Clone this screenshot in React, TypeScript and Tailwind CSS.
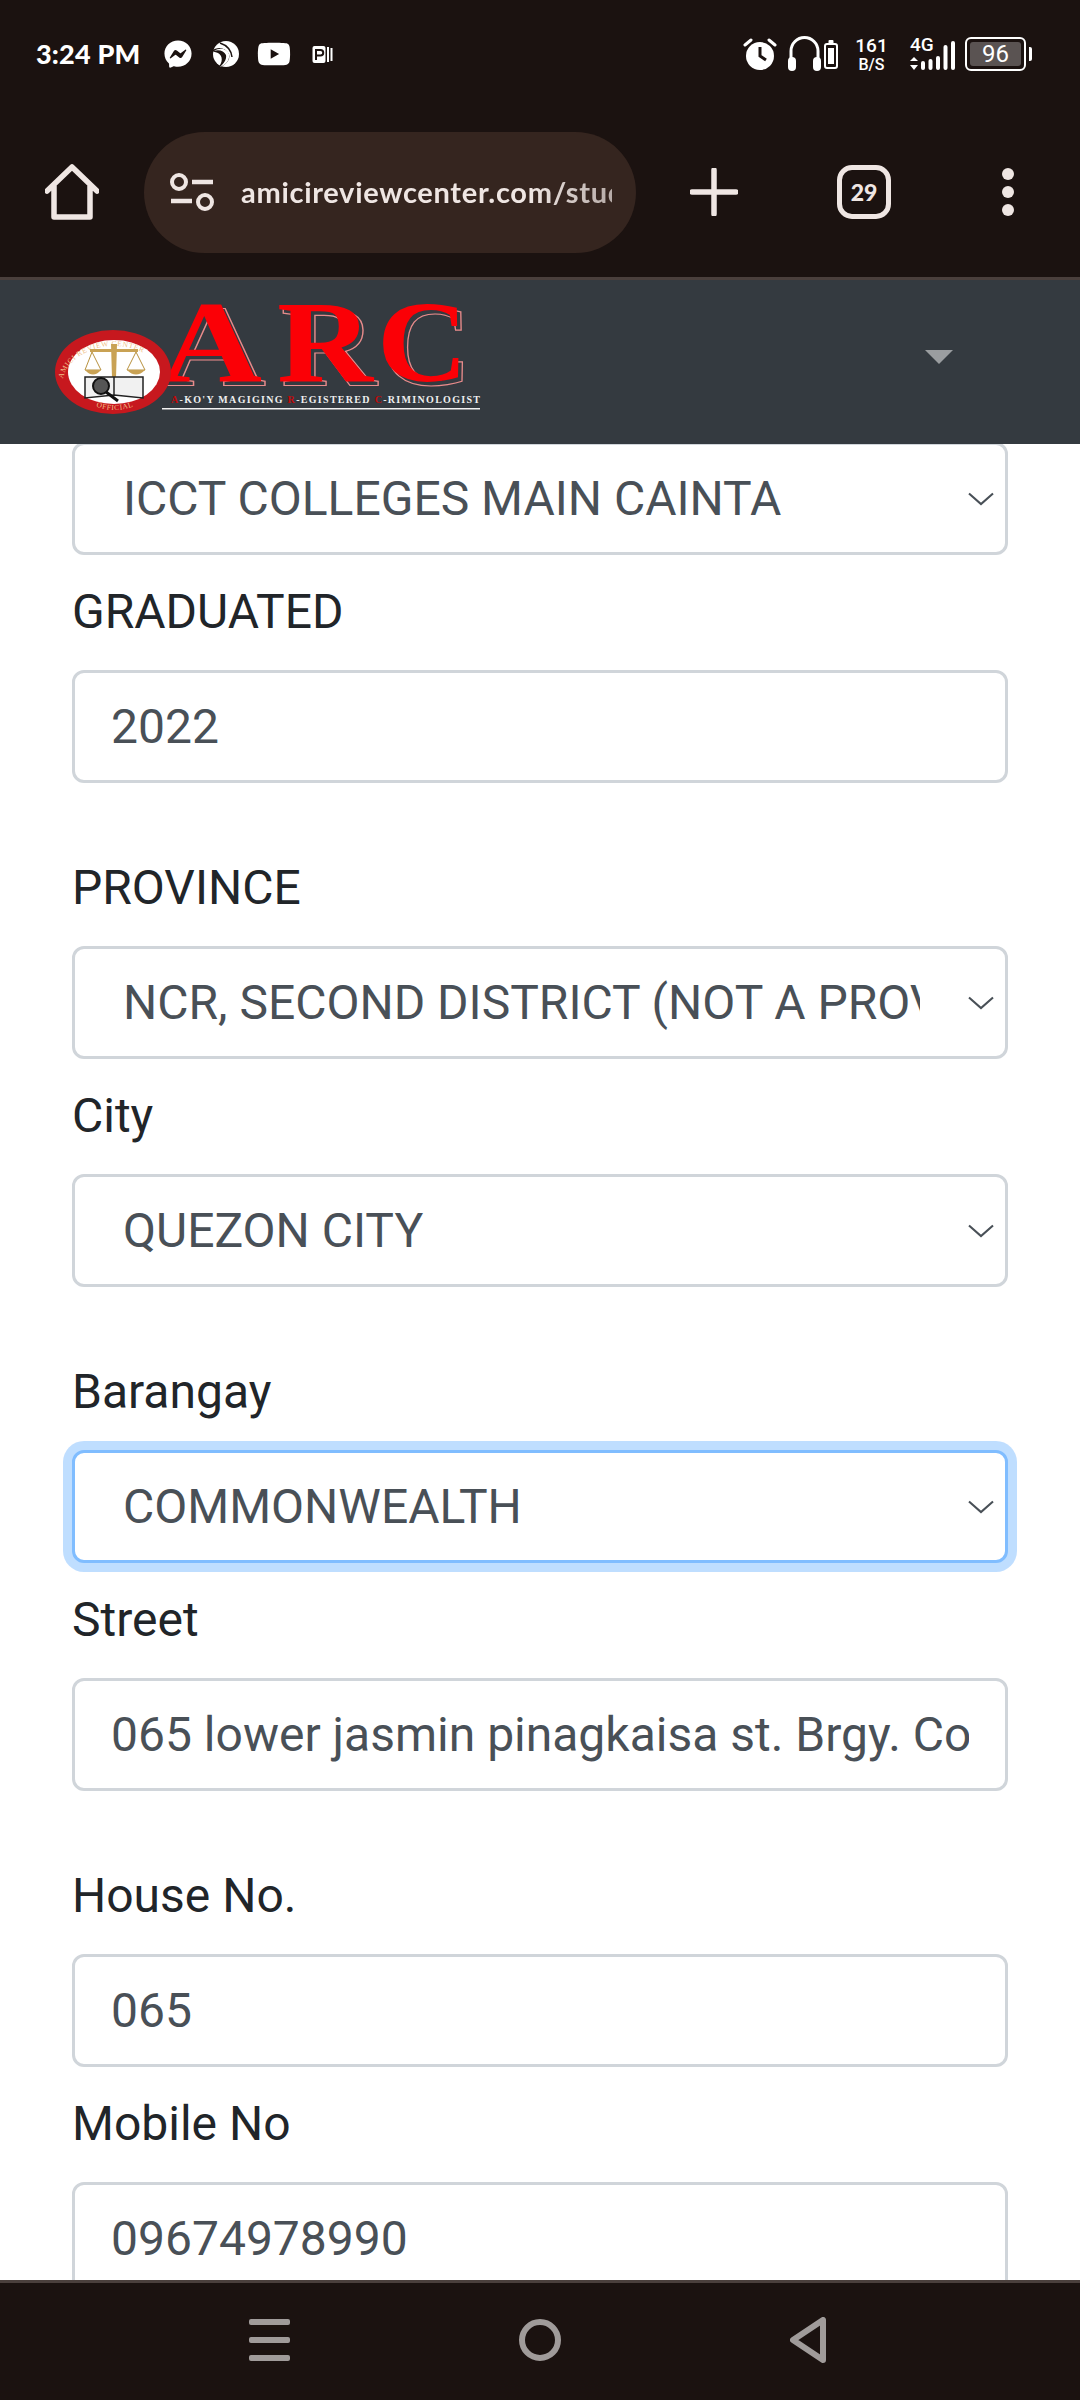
import React from "react";
import { FaFacebookMessenger, FaYoutube } from "react-icons/fa";

const ROBOTO = "font-['Roboto',sans-serif]";

function Chevron() {
  return (
    <svg className="absolute right-[14px] top-[50px] w-[26px] h-[14px]" viewBox="0 0 26 14" fill="none">
      <path d="M1 1.5 L13 12 L25 1.5" stroke="#495057" strokeWidth="2.1" />
    </svg>
  );
}

function SelectBox({ value, focus }: { value: string; focus?: boolean }) {
  return (
    <div className="relative">
      <select
        defaultValue={value}
        className={
          focus
            ? "block w-full h-[113px] appearance-none rounded-[12px] border-[3px] border-[#80bdff] bg-white pl-[48px] pr-[85px] text-[48px] text-[#495057] shadow-[0_0_0_9px_rgba(0,123,255,0.25)] outline-none"
            : "block w-full h-[113px] appearance-none rounded-[12px] border-[3px] border-[#d0d5da] bg-white pl-[48px] pr-[85px] text-[48px] text-[#495057] outline-none"
        }
      >
        <option>{value}</option>
      </select>
      <Chevron />
    </div>
  );
}

function InputBox({ value }: { value: string }) {
  return (
    <input
      readOnly
      value={value}
      className="block w-full h-[113px] rounded-[12px] border-[3px] border-[#d0d5da] bg-white px-[36px] text-[48px] text-[#495057] outline-none"
    />
  );
}

function Field({ label, wide, children }: { label: string; wide?: boolean; children: React.ReactNode }) {
  return (
    <div className={wide ? "mt-[69px]" : "mt-[21px]"}>
      <div className="h-[72px] mb-[22px] text-[48px] leading-[72px] text-[#212529]">{label}</div>
      {children}
    </div>
  );
}

function StatusBar() {
  return (
    <div className="h-[108px] flex items-center justify-between pl-[36px] pr-[48px] text-white">
      <div className="flex items-center">
        <span className="w-[106px] text-[27px] font-black tracking-[0.2px] font-['Lato',sans-serif] whitespace-nowrap">3:24 PM</span>
        <FaFacebookMessenger className="ml-[22px] w-[28px] h-[28px]" />
        <svg className="ml-[19px] w-[28px] h-[28px]" viewBox="0 0 28 28">
          <circle cx="15" cy="14" r="13" fill="#fff" />
          <path d="M0 11 C7 6 14 7 18 14 C20 20 14 26 7 28 C12 22 12 16 7 13 C5 12 3 12 0 11Z" fill="#1b1210" />
          <path d="M3 11 C8 9 13 11 15 15 C16 20 12 24 9 27 C15 25 19 20 18 14 C16 9 9 7 3 11Z" fill="#fff" />
          <path d="M9 3 C15 5 20 9 21 17" stroke="#1b1210" strokeWidth="1.5" fill="none" />
        </svg>
        <FaYoutube className="ml-[18px] w-[34px] h-[34px]" />
        <svg className="ml-[21px] w-[21px] h-[19px]" viewBox="0 0 21 19">
          <rect x="0.5" y="1" width="13" height="17" rx="2" fill="#fff" />
          <path d="M4 15 V5 H8.5 A2.6 2.6 0 0 1 8.5 10.5 H4" stroke="#1b1210" strokeWidth="2" fill="none" />
          <rect x="15" y="2" width="2" height="15" fill="#fff" />
          <rect x="18.5" y="3" width="2" height="13" fill="#fff" />
        </svg>
      </div>
      <div className="flex items-center">
        <svg className="w-[34px] h-[34px]" viewBox="0 0 34 34">
          <circle cx="17" cy="19" r="14" fill="#fff" />
          <path d="M17 10 V19 L23 23" stroke="#1b1210" strokeWidth="3" fill="none" />
          <path d="M2 8 L8 3 M32 8 L26 3" stroke="#fff" strokeWidth="3" strokeLinecap="round" />
        </svg>
        <svg className="ml-[11px] w-[33px] h-[36px]" viewBox="0 0 33 36" fill="none">
          <path d="M3 24 V15 A13.5 13.5 0 0 1 30 15 V24" stroke="#fff" strokeWidth="3" />
          <rect x="0" y="21" width="8" height="14" rx="4" fill="#fff" />
          <rect x="25" y="21" width="8" height="14" rx="4" fill="#fff" />
        </svg>
        <svg className="ml-[3px] w-[14px] h-[29px]" viewBox="0 0 14 29" fill="none">
          <rect x="4.5" y="0" width="5" height="4" rx="1" fill="#fff" />
          <rect x="1" y="4" width="12" height="24" rx="2" stroke="#fff" strokeWidth="2" />
          <rect x="4" y="8" width="6" height="16" fill="#fff" />
        </svg>
        <div className="ml-[19px] w-[29px] flex flex-col items-center font-['Roboto',sans-serif] font-medium text-white">
          <span className="text-[19px] leading-[20px]">161</span>
          <span className="text-[16px] leading-[17px]">B/S</span>
        </div>
        <div className="ml-[24px] w-[46px] h-[34px] relative">
          <span className="absolute left-0 top-[-2px] text-[19px] leading-[20px] font-['Roboto',sans-serif] font-medium">4G</span>
          <svg className="absolute left-0 top-0 w-[46px] h-[34px]" viewBox="0 0 46 34">
            <path d="M0 24 H8 L4 20Z M0 28 H8 L4 33Z" fill="#fff" />
            <rect x="11" y="24" width="4" height="9" rx="2" fill="#fff" />
            <rect x="18.5" y="22" width="4" height="11" rx="2" fill="#fff" />
            <rect x="26" y="19" width="4" height="14" rx="2" fill="#fff" />
            <rect x="33.5" y="8" width="4" height="25" rx="2" fill="#fff" />
            <rect x="41" y="4" width="4" height="29" rx="2" fill="#fff" />
          </svg>
        </div>
        <div className="ml-[9px] w-[61px] h-[34px] rounded-[6px] border-[2px] border-white p-[3px] flex">
          <div className="flex-1 rounded-[3px] bg-[#5a5352] flex items-center justify-center text-[24px] leading-none font-['Roboto',sans-serif] text-white">96</div>
        </div>
        <div className="ml-[3px] w-[3px] h-[14px] rounded-r-[2px] bg-white" />
      </div>
    </div>
  );
}

function Toolbar() {
  return (
    <div className="h-[168px] flex items-center pl-[45px] text-[#efe6e3]">
      <svg className="w-[54px] h-[56px]" viewBox="0 0 54 56" fill="none">
        <path d="M2 27 L27 3 L52 27 M9 22 V53 H45 V22" stroke="#efe6e3" strokeWidth="5.5" strokeLinecap="round" strokeLinejoin="round" />
      </svg>
      <div className="ml-[45px] w-[492px] h-[121px] rounded-full bg-[#35251f] flex items-center pl-[26px]">
        <svg className="w-[44px] h-[38px] shrink-0" viewBox="0 0 44 38" fill="none">
          <circle cx="9" cy="9" r="7" stroke="#efe6e3" strokeWidth="4" />
          <path d="M22 9 H43 M1 28 H22" stroke="#efe6e3" strokeWidth="4.5" />
          <circle cx="35" cy="29" r="7" stroke="#efe6e3" strokeWidth="4" />
        </svg>
        <div className="ml-[27px] w-[371px] overflow-hidden whitespace-nowrap text-[29px] font-bold tracking-[0.7px] font-['Lato',sans-serif] text-[#efe6e3] [mask-image:linear-gradient(to_right,#000_78%,rgba(0,0,0,0.7))]">
          amicireviewcenter.com/student
        </div>
      </div>
      <svg className="ml-[54px] w-[48px] h-[48px]" viewBox="0 0 48 48">
        <path d="M24 2 V46 M2 24 H46" stroke="#efe6e3" strokeWidth="5.5" strokeLinecap="round" />
      </svg>
      <div className="ml-[99px] w-[54px] h-[54px] rounded-[15px] border-[5.5px] border-[#efe6e3] flex items-center justify-center text-[23px] font-black leading-none font-['Lato',sans-serif]">
        29
      </div>
      <div className="ml-[111px] flex flex-col gap-[6px]">
        <div className="w-[12px] h-[12px] rounded-full bg-[#efe6e3]" />
        <div className="w-[12px] h-[12px] rounded-full bg-[#efe6e3]" />
        <div className="w-[12px] h-[12px] rounded-full bg-[#efe6e3]" />
      </div>
    </div>
  );
}

function ArcLetter({ ch, x, w }: { ch: string; x: number; w: number }) {
  return (
    <g fontFamily="'Liberation Serif',serif" fontWeight="700" fontSize="116">
      <text x={x + 4} y="385" textLength={w} lengthAdjust="spacingAndGlyphs" fill="none" stroke="#e88b8b" strokeWidth="1.2">{ch}</text>
      <text x={x} y="381" textLength={w} lengthAdjust="spacingAndGlyphs" fill="#fb0006">{ch}</text>
    </g>
  );
}

function Logo() {
  return (
    <svg className="w-[440px] h-[130px]" viewBox="50 295 440 130">
      <defs>
        <path id="arcTop" d="M62 386 A52 40 0 0 1 166 386" />
        <path id="arcBottom" d="M78 396 Q114 424 152 396" />
      </defs>
      <ArcLetter ch="A" x={160} w={102} />
      <ArcLetter ch="R" x={277} w={96} />
      <ArcLetter ch="C" x={377} w={91} />
      <ellipse cx="113" cy="372" rx="58" ry="42" fill="#c7181e" />
      <ellipse cx="114" cy="372" rx="46" ry="32" fill="#fff" />
      <text fontFamily="'Liberation Serif',serif" fontSize="7.5" fill="#f0c088" letterSpacing="0.6">
        <textPath href="#arcTop" startOffset="5%">AMICI REVIEW CENTER</textPath>
      </text>
      <text fontFamily="'Liberation Serif',serif" fontSize="7.5" fill="#f0c088" letterSpacing="0.6">
        <textPath href="#arcBottom" startOffset="26%">OFFICIAL</textPath>
      </text>
      <path d="M111 344 H117 L116 378 H112Z M90 349 H138 V352 H90Z" fill="#c9a254" />
      <path d="M92 352 L85 370 H101Z M136 352 L127 370 H145Z" fill="none" stroke="#b8923f" strokeWidth="1" />
      <path d="M85 370 Q93 379 101 370Z M127 370 Q136 379 145 370Z" fill="#c9a254" />
      <path d="M85 377 H143 V398 L114 395 L85 398Z" fill="#f1f1f1" stroke="#222" strokeWidth="1.5" />
      <path d="M114 377 V395" stroke="#222" strokeWidth="1.5" />
      <circle cx="101" cy="386" r="8" fill="#555" stroke="#111" strokeWidth="2" />
      <path d="M106 392 L118 401" stroke="#111" strokeWidth="3" />
      <text x="171" y="403" fontFamily="'Liberation Serif',serif" fontWeight="700" fontSize="10" textLength="309" fill="#efefef">
        <tspan fill="#c40808">A</tspan>-KO'Y MAGIGING <tspan fill="#c40808">R</tspan>-EGISTERED <tspan fill="#c40808">C</tspan>-RIMINOLOGIST
      </text>
      <rect x="162" y="408" width="318" height="1.5" fill="#f2f2f2" />
    </svg>
  );
}

function NavBar() {
  return (
    <div className="h-[164px] shrink-0 bg-[#343a40] flex items-start justify-between pl-[50px] pr-[127px] pt-[15px]">
      <Logo />
      <div className="mt-[55px] w-0 h-0 border-x-[14.5px] border-x-transparent border-t-[14px] border-t-[#9a9da0]" />
    </div>
  );
}

function BottomBar() {
  return (
    <div className="h-[120px] shrink-0 border-t-[3px] border-[#4a3f3c] bg-[#1b1210] flex items-center justify-center pb-[3px] pr-[6px]">
      <div className="flex items-center">
        <div className="w-[41px] flex flex-col gap-[12px]">
          <div className="h-[6px] rounded-[2px] bg-[#a09b9a]" />
          <div className="h-[6px] rounded-[2px] bg-[#a09b9a]" />
          <div className="h-[6px] rounded-[2px] bg-[#a09b9a]" />
        </div>
        <div className="ml-[229px] w-[42px] h-[42px] rounded-full border-[6px] border-[#a09b9a]" />
        <svg className="ml-[229px] w-[36px] h-[46px]" viewBox="0 0 36 46" fill="none">
          <path d="M33 3 V43 L3 23 Z" stroke="#a09b9a" strokeWidth="6" strokeLinejoin="round" />
        </svg>
      </div>
    </div>
  );
}

export default function App() {
  return (
    <div className={`${ROBOTO} w-[1080px] h-[2400px] flex flex-col overflow-hidden bg-white`}>
      <div className="h-[280px] shrink-0 bg-[#1b1210] border-b-[3px] border-[#4a3f3c]">
        <StatusBar />
        <Toolbar />
      </div>
      <NavBar />
      <main className="flex-1 min-h-0 overflow-hidden px-[72px]">
        <div className="-mt-[2px]">
          <SelectBox value="ICCT COLLEGES MAIN CAINTA" />
        </div>
        <Field label="GRADUATED">
          <InputBox value="2022" />
        </Field>
        <Field label="PROVINCE" wide>
          <SelectBox value="NCR, SECOND DISTRICT (NOT A PROVINCE)" />
        </Field>
        <Field label="City">
          <SelectBox value="QUEZON CITY" />
        </Field>
        <Field label="Barangay" wide>
          <SelectBox value="COMMONWEALTH" focus />
        </Field>
        <Field label="Street">
          <InputBox value="065 lower jasmin pinagkaisa st. Brgy. Commonwealth" />
        </Field>
        <Field label="House No." wide>
          <InputBox value="065" />
        </Field>
        <Field label="Mobile No">
          <InputBox value="09674978990" />
        </Field>
      </main>
      <BottomBar />
    </div>
  );
}
